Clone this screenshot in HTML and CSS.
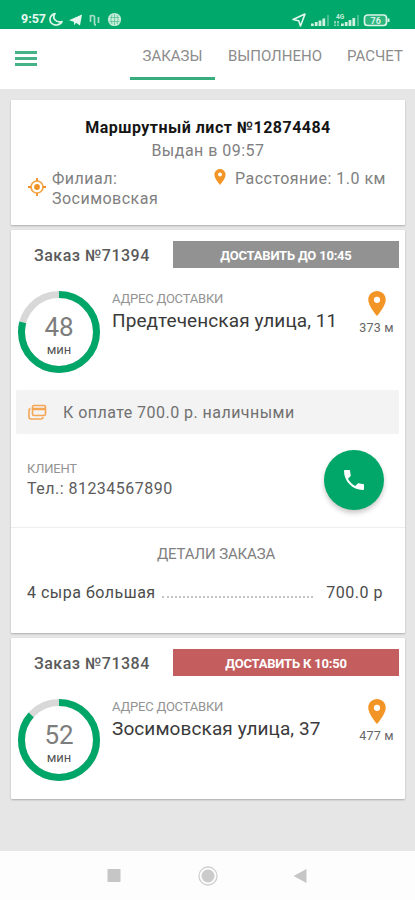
FILE: index.html
```html
<!DOCTYPE html>
<html lang="ru">
<head>
    <meta charset="UTF-8">
    <meta name="viewport" content="width=device-width, initial-scale=1.0">
    <title>Заказы</title>
    <link rel="stylesheet" href="styles.css">
</head>
<body>
    <svg class="sprite" width="0" height="0">
        <symbol id="pin" viewBox="5 2 14 20">
            <path fill-rule="evenodd" d="M12 2C8.13 2 5 5.13 5 9c0 5.25 7 13 7 13s7-7.75 7-13c0-3.87-3.13-7-7-7zm0 9.5a2.5 2.5 0 1 1 0-5 2.5 2.5 0 0 1 0 5z"/>
        </symbol>
    </svg>

    <div class="status-bar">
        <span class="clock">9:57</span>
        <svg class="status-left" width="74" height="16" viewBox="0 0 74 16">
            <path d="M6 2.5C2.8 7 6.5 12 13 10.7 10.5 14.8 5 15 2.3 12-.5 8.5 1.5 3.5 6 2.5z" fill="none" stroke="#dff5ea" stroke-width="1.7" stroke-linejoin="round"/>
            <path d="M20 9.2 33 3.4 31 14.5 27 11.7 25.3 14.2 24.8 10.8z" fill="#e8f8f0"/>
            <path d="M41.5 11V6.500q0-2 2-2t2 2V12q0 2 1.500 2M49.500 6v6M41.500 6v-2" fill="none" stroke="#a6dfc5" stroke-width="1.7"/>
            <circle cx="65.500" cy="8.500" r="6.600" fill="#c5ebd9"/>
            <path d="M61 6.500h9M60.500 10.500h10M65.500 3v11M63 4q-2 4.500 0 9M68 4q2 4.500 0 9" fill="none" stroke="#58c497" stroke-width=".8"/>
        </svg>
        <svg class="status-right" width="102" height="18" viewBox="0 0 102 18">
            <path d="M2 9.5 14 4 9.5 16 7.7 10.7z" fill="none" stroke="#e5f7ee" stroke-width="1.6" stroke-linejoin="round"/>
            <path d="M20 13.500h2.800v2.500H20zM23.800 12h2.800v4h-2.800zM27.600 10.500h2.800V16h-2.800zM31.400 8.500h2.800V16h-2.800z" fill="#d0f0e0"/>
            <path d="M37 5v11" stroke="#65c99f" stroke-width="1.500"/>
            <path d="M44 11v5M47 11v5" stroke="#b2e4cd" stroke-width="1.500" stroke-dasharray="2.500 1"/>
            <path d="M50 13.500h2.800v2.500H50zM53.800 12h2.800v4h-2.800zM57.600 10h2.800v6h-2.800zM61.400 8h2.800v8h-2.800z" fill="#d0f0e0"/>
            <path d="M67 5v11" stroke="#65c99f" stroke-width="1.500"/>
            <text x="45" y="9" font-size="6.500" font-weight="700" fill="#c5ebd9">4G</text>
            <rect x="73.500" y="5" width="22" height="10.500" rx="3" fill="#2db57e" stroke="#d9f3e7" stroke-width="1.700"/>
            <path d="M97.500 8.500v3.500" stroke="#d9f3e7" stroke-width="2"/>
            <text x="79.500" y="13.500" font-size="9" font-weight="700" fill="#d9f3e7">76</text>
        </svg>
    </div>

    <div class="toolbar">
        <div class="menu-button">
            <span></span>
            <span></span>
            <span></span>
        </div>
        <div class="tabs">
            <div class="tab active">ЗАКАЗЫ</div>
            <div class="tab done">ВЫПОЛНЕНО</div>
            <div class="tab payment">РАСЧЕТ</div>
        </div>
    </div>

    <div class="content">
        <div class="card route">
            <h1>Маршрутный лист №12874484</h1>
            <p class="issued">Выдан в 09:57</p>
            <div class="route-info">
                <svg class="target-icon" width="18" height="18" viewBox="0 0 18 18">
                    <circle cx="9" cy="9" r="6" fill="none" stroke="#f6a343" stroke-width="1.7"/>
                    <circle cx="9" cy="9" r="2.9" fill="#f09125"/>
                    <path d="M9 0v3M9 15v3M0 9h3M15 9h3" stroke="#f09125" stroke-width="1.8"/>
                </svg>
                <div class="branch">Филиал:<br>Зосимовская</div>
                <svg class="pin pin-small"><use href="#pin"/></svg>
                <div class="distance">Расстояние: 1.0 км</div>
            </div>
        </div>

        <div class="card order first">
            <div class="order-header">
                <h2>Заказ №71394</h2>
                <div class="deadline">ДОСТАВИТЬ ДО 10:45</div>
            </div>
            <div class="order-body">
                <div class="timer">
                    <svg width="82" height="82" viewBox="0 0 82 82">
                        <circle class="ring" cx="41" cy="41" r="37.5"/>
                        <circle class="ring-value" cx="41" cy="41" r="37.5" pathLength="60" stroke-dasharray="47.5 60"/>
                    </svg>
                    <div class="timer-text"><b>48</b><span>мин</span></div>
                </div>
                <div class="address">
                    <div class="label">АДРЕС ДОСТАВКИ</div>
                    <div class="street">Предтеченская улица, 11</div>
                </div>
                <div class="location">
                    <svg class="pin"><use href="#pin"/></svg>
                    <span>373 м</span>
                </div>
            </div>
            <div class="pay">
                <svg width="19" height="17" viewBox="0 0 19 17" fill="none" stroke="#f5a655" stroke-width="1.6">
                    <rect x="4.5" y="1.5" width="13" height="10" rx="1.5"/>
                    <path d="M4.5 5h13" stroke-width="2.5"/>
                    <path d="M2.5 4.500Q1 5 1 6.500V13q0 2 2 2h10q1.800 0 2-2"/>
                </svg>
                <span>К оплате 700.0 р. наличными</span>
            </div>
            <div class="client">
                <div class="client-info">
                    <div class="label">КЛИЕНТ</div>
                    <div class="phone">Тел.: 81234567890</div>
                </div>
                <div class="call-button">
                    <svg width="20" height="20" viewBox="3 3 18 18">
                        <path d="M6.62 10.79c1.44 2.83 3.76 5.14 6.59 6.59l2.2-2.2c.27-.27.67-.36 1.02-.24 1.12.37 2.33.57 3.57.57.55 0 1 .45 1 1V20c0 .55-.45 1-1 1-9.39 0-17-7.61-17-17 0-.55.45-1 1-1h3.5c.55 0 1 .45 1 1 0 1.25.2 2.45.57 3.57.11.35.03.74-.25 1.02l-2.2 2.2z" fill="#fff"/>
                    </svg>
                </div>
            </div>
            <div class="details">
                <h3>ДЕТАЛИ ЗАКАЗА</h3>
                <div class="item">
                    <span class="item-name">4 сыра большая</span>
                    <span class="dots"></span>
                    <span class="price">700.0 р</span>
                </div>
            </div>
        </div>

        <div class="card order second">
            <div class="order-header">
                <h2>Заказ №71384</h2>
                <div class="deadline urgent">ДОСТАВИТЬ К 10:50</div>
            </div>
            <div class="order-body">
                <div class="timer">
                    <svg width="82" height="82" viewBox="0 0 82 82">
                        <circle class="ring" cx="41" cy="41" r="37.5"/>
                        <circle class="ring-value" cx="41" cy="41" r="37.5" pathLength="60" stroke-dasharray="52 60"/>
                    </svg>
                    <div class="timer-text"><b>52</b><span>мин</span></div>
                </div>
                <div class="address">
                    <div class="label">АДРЕС ДОСТАВКИ</div>
                    <div class="street">Зосимовская улица, 37</div>
                </div>
                <div class="location">
                    <svg class="pin"><use href="#pin"/></svg>
                    <span>477 м</span>
                </div>
            </div>
        </div>
    </div>

    <div class="nav-bar">
        <svg width="415" height="49" viewBox="0 0 415 49">
            <rect x="107.5" y="18" width="13" height="13" fill="#c6c6c6"/>
            <circle cx="208" cy="25" r="9" fill="none" stroke="#cfcfcf" stroke-width="1.3"/>
            <circle cx="208" cy="25" r="6.5" fill="#cbcbcb"/>
            <path d="M293.5 25 306.5 18v14z" fill="#c6c6c6"/>
        </svg>
    </div>
</body>
</html>
```
FILE: styles.css
```css
* {
    box-sizing: border-box;
}

body {
    margin: 0;
    height: 900px;
    display: flex;
    flex-direction: column;
    overflow: hidden;
    background: #e6e6e6;
    font-family: Roboto, sans-serif;
    color: #444;
}

h1, h2, h3, p {
    margin: 0;
}

.sprite {
    position: absolute;
}

.status-bar {
    height: 29px;
    flex: none;
    display: flex;
    align-items: center;
    padding: 8px 22px 0 21px;
    background: #00a86b;
    color: #e8f8f0;
}

.clock {
    width: 27px;
    font-size: 12.5px;
    font-weight: 700;
    white-space: nowrap;
}

.status-left {
    margin-left: 1px;
}

.status-right {
    margin-left: auto;
}

.toolbar {
    height: 60px;
    flex: none;
    display: flex;
    background: #fff;
}

.menu-button {
    width: 130px;
    padding: 22px 0 0 15px;
}

.menu-button span {
    display: block;
    width: 22px;
    height: 3px;
    margin-bottom: 3px;
    background: #46b287;
}

.tabs {
    display: flex;
    height: 51px;
}

.tab {
    padding-top: 17px;
    font-size: 15px;
    line-height: 20px;
    color: #8c8c8c;
    text-align: center;
    white-space: nowrap;
}

.tab.active {
    width: 85px;
    border-bottom: 3px solid #37ad7d;
}

.tab.done {
    width: 120px;
}

.tab.payment {
    width: 80px;
}

.content {
    flex: 1;
    display: flex;
    flex-direction: column;
    gap: 5px;
    padding: 11px 10px 0 11px;
}

.card {
    background: #fff;
    border-radius: 1px;
    box-shadow: 0 1px 2px rgba(0, 0, 0, 0.25);
}

.route {
    height: 125px;
    padding-top: 18px;
    text-align: center;
    letter-spacing: 0.48px;
}

.route h1 {
    font-size: 16px;
    line-height: 20px;
    font-weight: 700;
    color: #151515;
}

.issued {
    margin-top: 3px;
    font-size: 16px;
    line-height: 20px;
    color: #808080;
}

.route-info {
    display: flex;
    margin-top: 8px;
    padding-left: 17px;
    font-size: 16px;
    line-height: 20px;
    color: #808080;
    text-align: left;
    white-space: nowrap;
}

.target-icon {
    margin: 9px 6px 0 0;
}

.branch {
    width: 162px;
}

.pin {
    width: 18px;
    height: 25px;
    fill: #f39426;
}

.pin-small {
    width: 12px;
    height: 16px;
    margin: 0 9px 0 0;
}

.order.first {
    height: 403px;
}

.order.second {
    height: 161px;
}

.order-header {
    display: flex;
    align-items: center;
    padding: 11px 6px 0 23px;
}

.order-header h2 {
    width: 139px;
    padding-top: 2px;
    font-size: 16px;
    font-weight: 500;
    letter-spacing: 0.5px;
    color: #5a5a5a;
    white-space: nowrap;
}

.deadline {
    flex: 1;
    height: 27px;
    background: #929292;
    color: #fff;
    font-size: 13px;
    font-weight: 700;
    line-height: 29px;
    letter-spacing: -0.2px;
    text-align: center;
}

.deadline.urgent {
    background: #c45e5e;
}

.order-body {
    display: flex;
    height: 122px;
    padding: 23px 6px 0 7px;
}

.timer {
    display: grid;
    width: 82px;
    height: 82px;
}

.timer > * {
    grid-area: 1 / 1;
}

.timer-text {
    display: flex;
    flex-direction: column;
    align-items: center;
    padding-top: 22px;
    color: #555;
}

.timer-text b {
    font-size: 26px;
    line-height: 28px;
    font-weight: 400;
    color: #7d7d7d;
}

.timer-text span {
    margin-top: 1px;
    font-size: 13px;
    line-height: 16px;
}

.ring,
.ring-value {
    fill: none;
    stroke: #d8d8d8;
    stroke-width: 7;
}

.ring-value {
    stroke: #00a667;
    transform: rotate(-90deg);
    transform-origin: 50% 50%;
}

.address {
    flex: 1;
    padding-left: 12px;
    white-space: nowrap;
}

.label {
    font-size: 13px;
    line-height: 16px;
    letter-spacing: -0.2px;
    color: #939393;
}

.street {
    margin-top: 2px;
    font-size: 19px;
    line-height: 24px;
    letter-spacing: 0.1px;
    color: #3a3a3a;
}

.location {
    display: flex;
    flex-direction: column;
    align-items: center;
    width: 45px;
    font-size: 12.5px;
    line-height: 16px;
    letter-spacing: 0.2px;
    color: #666;
}

.location span {
    margin-top: 4px;
    white-space: nowrap;
}

.pay {
    display: flex;
    align-items: center;
    gap: 16px;
    height: 44px;
    margin: 0 6px 0 5px;
    padding: 0 0 0 12px;
    border-radius: 2px;
    background: #f3f3f3;
    font-size: 16px;
    letter-spacing: 0.46px;
    color: #707070;
}

.client {
    display: flex;
    justify-content: space-between;
    height: 94px;
    padding: 16px 21px 0 16px;
    border-bottom: 1px solid #eee;
}

.client-info {
    padding-top: 11px;
}

.phone {
    margin-top: 2px;
    font-size: 16px;
    line-height: 20px;
    letter-spacing: 0.48px;
    color: #5c5c5c;
}

.call-button {
    display: flex;
    align-items: center;
    justify-content: center;
    width: 60px;
    height: 60px;
    border-radius: 50%;
    background: #00a768;
    box-shadow: 0 3px 5px rgba(0, 0, 0, 0.22);
}

.details {
    padding: 16px 22px 0 16px;
}

.details h3 {
    padding-left: 22px;
    font-size: 15px;
    line-height: 20px;
    font-weight: 400;
    letter-spacing: -0.15px;
    color: #808080;
    text-align: center;
}

.item {
    display: flex;
    margin-top: 19px;
    font-size: 16px;
    line-height: 20px;
    letter-spacing: 0.5px;
    color: #4c4c4c;
}

.dots {
    flex: 1;
    height: 15px;
    margin: 0 13px 0 6px;
    border-bottom: 2px dotted #c4c4c4;
}

.nav-bar {
    height: 49px;
    flex: none;
    background: #fdfdfd;
}
```
